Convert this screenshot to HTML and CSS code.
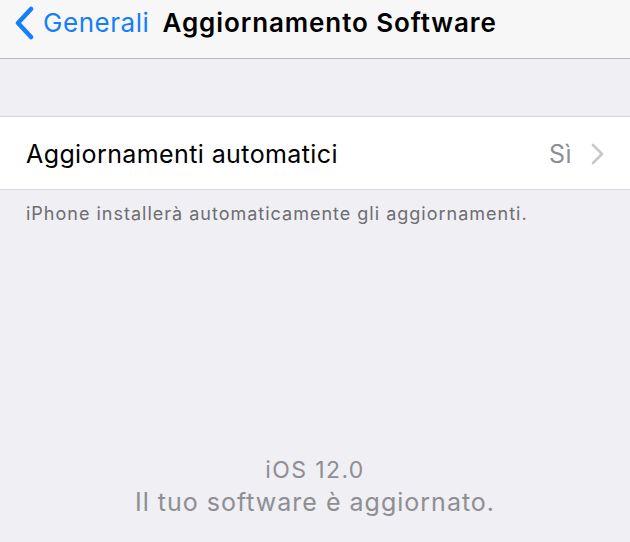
FILE: index.html
```html
<!DOCTYPE html>
<html lang="it">
<head>
  <meta charset="UTF-8">
  <title>Aggiornamento Software</title>
  <link rel="stylesheet" href="styles.css">
</head>
<body>
  <!-- Navigation Bar -->
  <div class="nav-bar">
    <a class="back" href="#">
      <svg class="back-chevron" width="22" height="34" viewBox="0 0 22 34">
        <path d="M18 3 L5 17 L18 31" fill="none" stroke="#147efb" stroke-width="4.5" stroke-linecap="round" stroke-linejoin="round"/>
      </svg>
      <span>Generali</span>
    </a>
    <div class="nav-title">Aggiornamento Software</div>
  </div>

  <!-- Settings Group -->
  <div class="group">
    <div class="cell">
      <span class="cell-label">Aggiornamenti automatici</span>
      <span class="cell-value">Sì</span>
      <svg class="cell-chevron" width="13" height="22" viewBox="0 0 13 22">
        <path d="M2 2 L11 11 L2 20" fill="none" stroke="#c7c7cc" stroke-width="2.6" stroke-linecap="round" stroke-linejoin="round"/>
      </svg>
    </div>
  </div>
  <div class="group-footer">iPhone installerà automaticamente gli aggiornamenti.</div>

  <!-- Status -->
  <div class="status">
    <div class="status-version">iOS 12.0</div>
    <div class="status-text">Il tuo software è aggiornato.</div>
  </div>
</body>
</html>
```

FILE: styles.css
```css
/* General */
body {
  margin: 0;
  height: 542px;
  overflow: hidden;
  background: #efeff4;
  font-family: 'Inter', 'Roboto', sans-serif;
  display: flex;
  flex-direction: column;
}

/* Navigation Bar */
.nav-bar {
  height: 58px;
  background: #f7f7f7;
  border-bottom: 1px solid #b8b8bc;
  display: flex;
  align-items: center;
  padding-left: 13px;
}

.back {
  display: flex;
  align-items: center;
  color: #147efb;
  text-decoration: none;
  font-size: 26px;
  letter-spacing: 0.55px;
  margin-top: -13px;
}

.back-chevron {
  margin-right: 8px;
}

.nav-title {
  font-size: 26px;
  font-weight: 600;
  color: #000;
  margin-left: 13px;
  margin-top: -13px;
  letter-spacing: 0.9px;
}

/* Settings Group */
.group {
  margin-top: 57px;
  background: #fff;
  border-top: 1px solid #d8d8dc;
  border-bottom: 1px solid #d8d8dc;
}

.cell {
  height: 72px;
  display: flex;
  align-items: center;
  padding: 2px 26px 0;
  box-sizing: border-box;
}

.cell-label {
  flex: 1;
  font-size: 25px;
  color: #000;
  letter-spacing: 0.4px;
}

.cell-value {
  font-size: 25px;
  color: #8e8e93;
  margin-right: 19px;
  letter-spacing: 0.4px;
}

.group-footer {
  padding: 13px 26px 0;
  font-size: 18px;
  color: #6d6d72;
  letter-spacing: 1px;
}

/* Status */
.status {
  margin-top: auto;
  padding-bottom: 22px;
  text-align: center;
  color: #8e8e93;
}

.status-version {
  font-size: 23px;
  line-height: 30px;
  letter-spacing: 1.4px;
}

.status-text {
  font-size: 25px;
  line-height: 35px;
  letter-spacing: 1px;
}
```
